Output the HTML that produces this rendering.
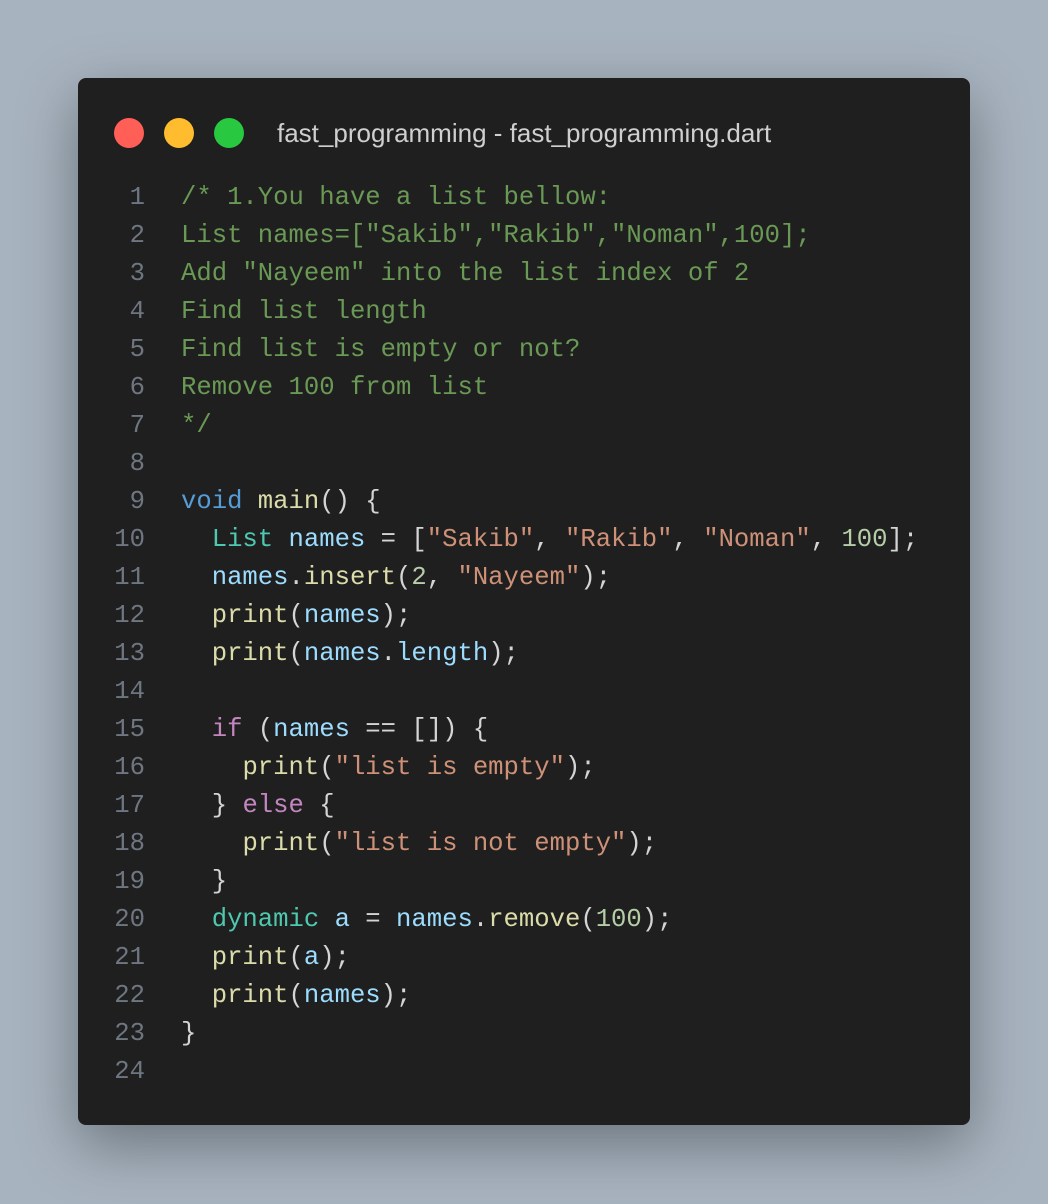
<!DOCTYPE html>
<html><head><style>
html,body{margin:0;padding:0}
body{width:1048px;height:1204px;background:#a7b3bf;position:relative;overflow:hidden}
.win{position:absolute;left:78px;top:78px;width:892px;height:1047px;background:#1f1f1f;border-radius:8px;box-shadow:0 20px 60px rgba(0,0,0,0.35)}
.dot{position:absolute;top:40px;width:30px;height:30px;border-radius:50%}
.title{position:absolute;left:199px;top:38px;font:26px "Liberation Sans",sans-serif;color:#cfcfcf;line-height:34px}
.code{position:absolute;left:0;top:101px;font:25.6px/38px "Liberation Mono",monospace;color:#d4d4d4;white-space:pre}
.ln{display:inline-block;width:67px;text-align:right;color:#6e7681;margin-right:36px}
.c{color:#6a9955}.k{color:#569cd6}.f{color:#dcdcaa}.v{color:#9cdcfe}.t{color:#4ec9b0}.s{color:#ce9178}.n{color:#b5cea8}.p{color:#c586c0}
</style></head><body>
<div class="win">
<div class="dot" style="left:36px;background:#ff5f57"></div>
<div class="dot" style="left:86px;background:#febc2e"></div>
<div class="dot" style="left:136px;background:#28c840"></div>
<div class="title">fast_programming - fast_programming.dart</div>
<div class="code"><span class="ln">1</span><span class="c">/* 1.You have a list bellow:</span>
<span class="ln">2</span><span class="c">List names=["Sakib","Rakib","Noman",100];</span>
<span class="ln">3</span><span class="c">Add "Nayeem" into the list index of 2</span>
<span class="ln">4</span><span class="c">Find list length</span>
<span class="ln">5</span><span class="c">Find list is empty or not?</span>
<span class="ln">6</span><span class="c">Remove 100 from list</span>
<span class="ln">7</span><span class="c">*/</span>
<span class="ln">8</span>
<span class="ln">9</span><span class="k">void</span> <span class="f">main</span>() {
<span class="ln">10</span>  <span class="t">List</span> <span class="v">names</span> = [<span class="s">"Sakib"</span>, <span class="s">"Rakib"</span>, <span class="s">"Noman"</span>, <span class="n">100</span>];
<span class="ln">11</span>  <span class="v">names</span>.<span class="f">insert</span>(<span class="n">2</span>, <span class="s">"Nayeem"</span>);
<span class="ln">12</span>  <span class="f">print</span>(<span class="v">names</span>);
<span class="ln">13</span>  <span class="f">print</span>(<span class="v">names</span>.<span class="v">length</span>);
<span class="ln">14</span>
<span class="ln">15</span>  <span class="p">if</span> (<span class="v">names</span> == []) {
<span class="ln">16</span>    <span class="f">print</span>(<span class="s">"list is empty"</span>);
<span class="ln">17</span>  } <span class="p">else</span> {
<span class="ln">18</span>    <span class="f">print</span>(<span class="s">"list is not empty"</span>);
<span class="ln">19</span>  }
<span class="ln">20</span>  <span class="t">dynamic</span> <span class="v">a</span> = <span class="v">names</span>.<span class="f">remove</span>(<span class="n">100</span>);
<span class="ln">21</span>  <span class="f">print</span>(<span class="v">a</span>);
<span class="ln">22</span>  <span class="f">print</span>(<span class="v">names</span>);
<span class="ln">23</span>}
<span class="ln">24</span></div>
</div>
</body></html>
